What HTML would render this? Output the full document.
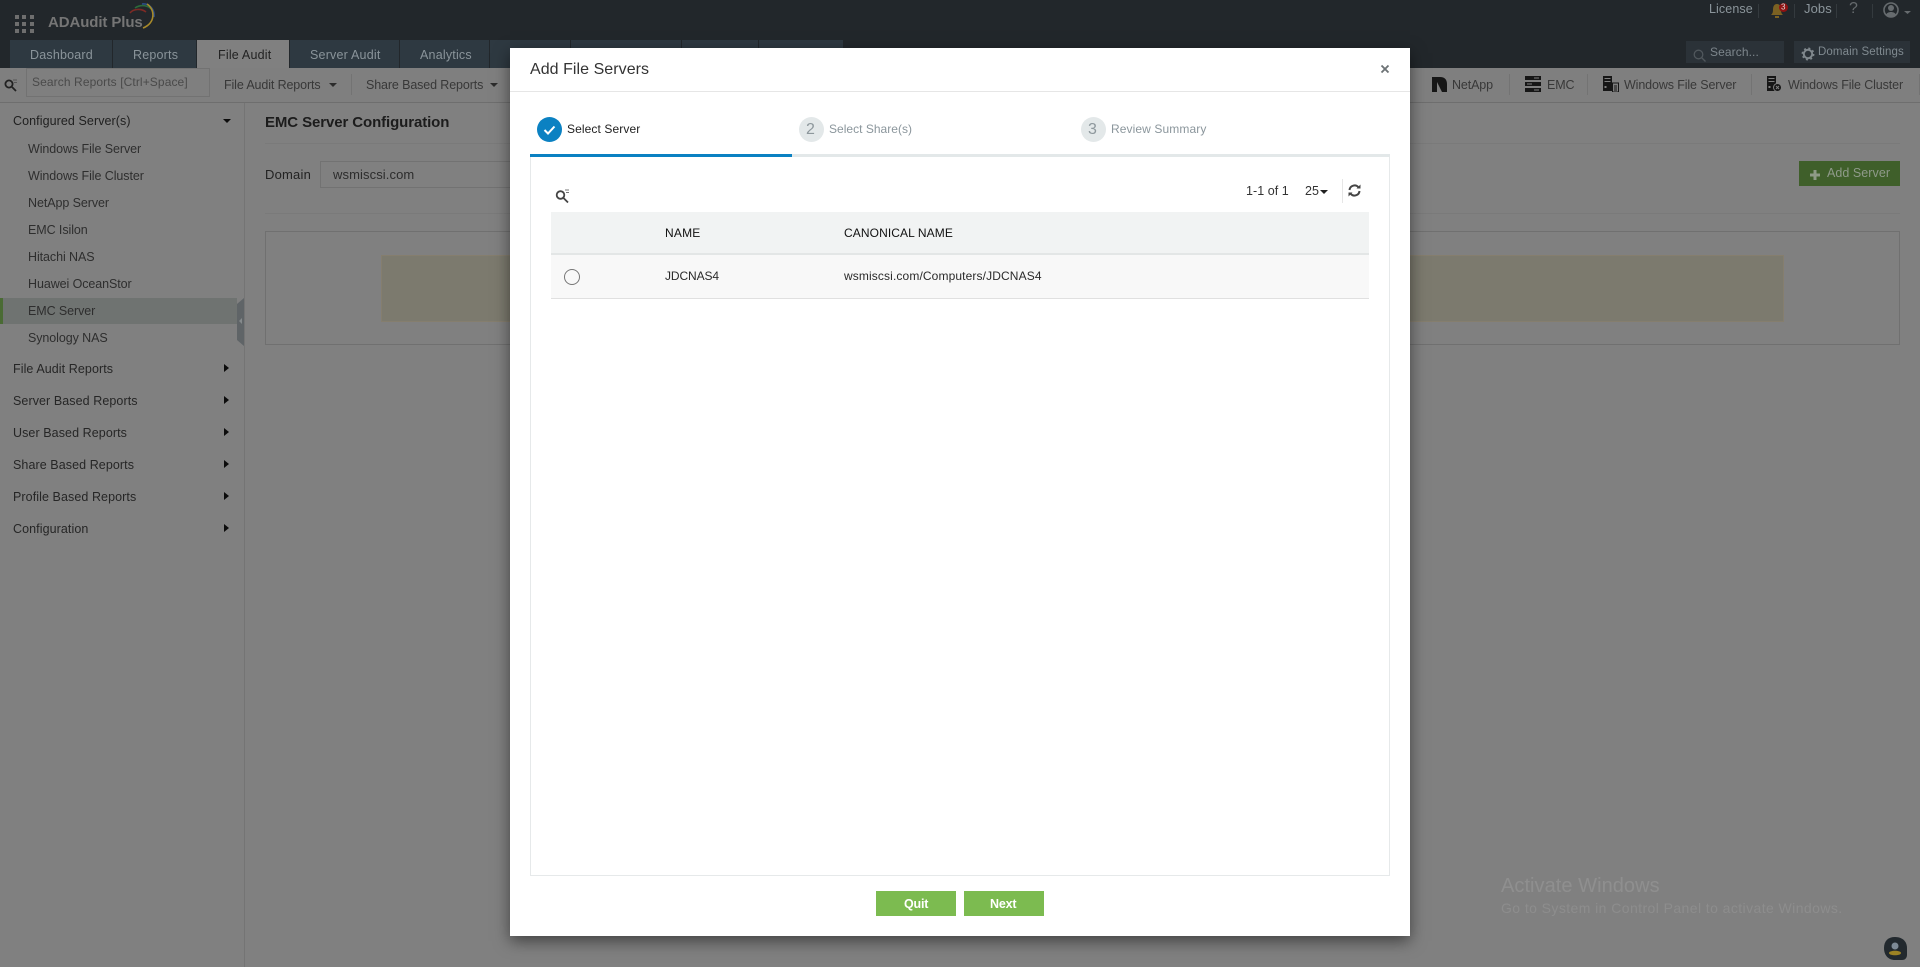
<!DOCTYPE html>
<html><head><meta charset="utf-8"><title>ADAudit Plus</title>
<style>
html,body{margin:0;padding:0;width:1920px;height:967px;overflow:hidden;background:#808080;font-family:"Liberation Sans",sans-serif}
div,span.t,svg{position:absolute}
.t{white-space:nowrap;transform:translateY(calc(-50% + 1px));font-size:13px;line-height:16px;color:#2d2d2d;letter-spacing:.1px}
.tab{color:#8a949a;font-size:12.500px;letter-spacing:.2px}
.b{top:40px;height:28px;background:#2e3941}
.s{left:28px;color:#2e2e2e;font-size:12.500px;letter-spacing:-.08px}
.m{left:13px;color:#262626;font-size:12.500px;letter-spacing:.08px}
.arr{left:224px;width:0;height:0;border-left:5px solid #0c0c0c;border-top:4.500px solid transparent;border-bottom:4.500px solid transparent}
.sep{width:1px;background:#737373;top:74px;height:21px}
.tb{color:#383838;font-size:12.500px;letter-spacing:-.12px;top:84px}
.g{color:#8b969c;font-size:12px}
</style></head><body>

<!-- header -->
<div style="left:0;top:0;width:1920px;height:68px;background:#22272b"></div>
<svg style="left:15px;top:15px" width="19" height="18"><g fill="#6e6e6e"><rect width="4" height="4"/><rect x="7" width="4" height="4"/><rect x="15" width="4" height="4"/><rect y="7" width="4" height="4"/><rect x="7" y="7" width="4" height="4"/><rect x="15" y="7" width="4" height="4"/><rect y="14" width="4" height="4"/><rect x="7" y="14" width="4" height="4"/><rect x="15" y="14" width="4" height="4"/></g></svg>
<span class="t" style="left:48px;top:22px;font-size:15px;font-weight:bold;color:#757575;letter-spacing:-.1px">ADAudit Plus</span>
<svg style="left:128px;top:3px" width="32" height="27" fill="none" stroke-width="1.600"><path d="M2 10C5 6 13 5 18 9" stroke="#7d2a25"/><path d="M7 5C13 1 21 2 25 8" stroke="#2c6b3a"/><path d="M14 1C21 0 27 6 26 14" stroke="#2b4f8e"/><path d="M19 1C27 6 28 20 15 25" stroke="#a88a2a"/></svg>

<div class="b" style="left:10px;width:102px"></div>
<div class="b" style="left:113px;width:83px"></div>
<div style="left:197px;top:40px;width:92px;height:28px;background:#808080"></div>
<div class="b" style="left:290px;width:109px"></div>
<div class="b" style="left:400px;width:89px"></div>
<div class="b" style="left:490px;width:80px"></div>
<div class="b" style="left:571px;width:110px"></div>
<div class="b" style="left:682px;width:76px"></div>
<div class="b" style="left:759px;width:84px"></div>
<span class="t tab" style="left:30px;top:54px">Dashboard</span>
<span class="t tab" style="left:133px;top:54px">Reports</span>
<span class="t tab" style="left:218px;top:54px;color:#222">File Audit</span>
<span class="t tab" style="left:310px;top:54px">Server Audit</span>
<span class="t tab" style="left:420px;top:54px">Analytics</span>

<span class="t" style="left:1709px;top:8px;color:#8b959b;font-size:12.500px;letter-spacing:.1px">License</span>
<div style="left:1758px;top:4px;width:1px;height:14px;background:#343a3e"></div>
<svg style="left:1770px;top:3px" width="15" height="15"><path d="M7 1C3.800 1 3 4 3 7C3 10 2 11 1 12H13C12 11 11 10 11 7C11 4 10 1 7 1Z" fill="#7b6122"/><rect x="5" y="13" width="4" height="2" fill="#7b6122"/></svg>
<div style="left:1779px;top:3px;width:9px;height:9px;border-radius:5px;background:#8f1212"></div>
<span class="t" style="left:1781px;top:6px;font-size:8px;line-height:9px;color:#ddd;letter-spacing:0">3</span>
<div style="left:1794px;top:4px;width:1px;height:14px;background:#343a3e"></div>
<span class="t" style="left:1804px;top:8px;color:#8b959b;font-size:13px">Jobs</span>
<div style="left:1836px;top:4px;width:1px;height:14px;background:#343a3e"></div>
<span class="t" style="left:1849px;top:8px;color:#666b6e;font-size:16px">?</span>
<div style="left:1872px;top:4px;width:1px;height:14px;background:#343a3e"></div>
<svg style="left:1883px;top:2px" width="34" height="17"><circle cx="8" cy="8" r="7" fill="none" stroke="#666b6e" stroke-width="1.600"/><circle cx="8" cy="6" r="3" fill="#666b6e"/><path d="M3 13C4 9 12 9 13 13L8 15Z" fill="#666b6e"/><path d="M21 9H28L24.500 12Z" fill="#666b6e"/></svg>

<div style="left:1686px;top:41px;width:98px;height:22px;background:#2b3238"></div>
<svg style="left:1693px;top:49px" width="14" height="14" fill="none" stroke="#50575c" stroke-width="1.300"><circle cx="5.500" cy="5.500" r="4.300"/><path d="M8.500 8.500L12.500 12.500"/></svg>
<span class="t" style="left:1710px;top:51px;color:#7d868c;font-size:12px;letter-spacing:.1px">Search...</span>
<div style="left:1794px;top:41px;width:116px;height:22px;background:#2b3238"></div>
<svg style="left:1801px;top:47px" width="14" height="14" fill="none" stroke="#80888d" stroke-width="2"><circle cx="7" cy="7" r="4.200"/><circle cx="7" cy="7" r="5.700" stroke-width="1.500" stroke-dasharray="2 2.500"/></svg>
<span class="t" style="left:1818px;top:51px;color:#808a90;font-size:11.500px;letter-spacing:.1px">Domain Settings</span>

<!-- toolbar -->
<div style="left:0;top:68px;width:1920px;height:34px;background:#7f7f7f"></div>
<div style="left:0;top:102px;width:1920px;height:1px;background:#6e6e6e"></div>
<svg style="left:4px;top:78px" width="14" height="14" fill="none" stroke="#222" stroke-width="1.800"><circle cx="5" cy="6" r="3.600"/><path d="M8 9L12 13"/><path d="M9 2H13M10 4.500H13" stroke-width="1" stroke="#555"/></svg>
<div style="left:26px;top:68px;width:184px;height:29px;border:1px solid #727272;box-sizing:border-box"></div>
<span class="t" style="left:32px;top:81px;color:#4a4a4a;font-size:12px;letter-spacing:.1px">Search Reports [Ctrl+Space]</span>
<span class="t tb" style="left:224px">File Audit Reports</span>
<svg style="left:328px;top:82px" width="10" height="6"><path d="M1 1H9L5 5Z" fill="#2c2c2c"/></svg>
<div class="sep" style="left:351px"></div>
<span class="t tb" style="left:366px">Share Based Reports</span>
<svg style="left:489px;top:82px" width="10" height="6"><path d="M1 1H9L5 5Z" fill="#2c2c2c"/></svg>

<svg style="left:1432px;top:77px" width="16" height="15"><path d="M0 0H8C13 0 15 3 15 7V15H10V7C10 5 9 5 8 5H5V15H0Z" fill="#161616"/><path d="M10 15L5 5H10Z" fill="#161616"/></svg>
<span class="t tb" style="left:1452px">NetApp</span>
<div class="sep" style="left:1509px"></div>
<svg style="left:1525px;top:76px" width="16" height="16" fill="#161616"><rect width="16" height="4"/><rect y="6" width="16" height="4"/><rect y="12" width="16" height="4"/><g fill="#7f7f7f"><rect x="9" y="1.500" width="5" height="1"/><rect x="2" y="7.500" width="5" height="1"/><rect x="9" y="13.500" width="5" height="1"/></g></svg>
<span class="t tb" style="left:1547px">EMC</span>
<div class="sep" style="left:1587px"></div>
<svg style="left:1603px;top:76px" width="16" height="16"><rect width="9" height="15" fill="#161616"/><g fill="#7f7f7f"><rect x="1.500" y="2" width="6" height="1"/><rect x="1.500" y="5" width="6" height="1"/><rect x="1.500" y="10" width="2" height="2"/></g><rect x="9.500" y="7" width="6" height="9" fill="#7f7f7f" stroke="#161616"/><path d="M11 10H14M11 12H14M11 14H14" stroke="#161616"/></svg>
<span class="t tb" style="left:1624px">Windows File Server</span>
<div class="sep" style="left:1751px"></div>
<svg style="left:1767px;top:76px" width="15" height="16"><rect width="9" height="15" fill="#161616"/><g fill="#7f7f7f"><rect x="1.500" y="2" width="6" height="1"/><rect x="1.500" y="5" width="6" height="1"/><rect x="1.500" y="10" width="2" height="2"/></g><circle cx="10.500" cy="11.500" r="4" fill="#161616" stroke="#7f7f7f"/><path d="M9 10L12 13M12 10L9 13" stroke="#7f7f7f"/></svg>
<span class="t tb" style="left:1788px">Windows File Cluster</span>
<div class="sep" style="left:1919px"></div>

<!-- sidebar -->
<div style="left:244px;top:103px;width:1px;height:864px;background:#747474"></div>
<span class="t m" style="top:120px;color:#202020">Configured Server(s)</span>
<svg style="left:222px;top:118px" width="10" height="6"><path d="M1 1H9L5 5Z" fill="#0c0c0c"/></svg>
<span class="t s" style="top:148px">Windows File Server</span>
<span class="t s" style="top:175px">Windows File Cluster</span>
<span class="t s" style="top:202px">NetApp Server</span>
<span class="t s" style="top:229px">EMC Isilon</span>
<span class="t s" style="top:256px">Hitachi NAS</span>
<span class="t s" style="top:283px">Huawei OceanStor</span>
<div style="left:0;top:298px;width:237px;height:26px;background:#6f7371"></div>
<div style="left:0;top:298px;width:3px;height:26px;background:#4a6b34"></div>
<span class="t s" style="top:310px">EMC Server</span>
<svg style="left:237px;top:298px" width="7" height="48"><path d="M7 0V48L0 42V6Z" fill="#5f6467"/><path d="M5 20V26L2 23Z" fill="#858a8c"/></svg>
<span class="t s" style="top:337px">Synology NAS</span>
<span class="t m" style="top:368px">File Audit Reports</span><div class="arr" style="top:364px"></div>
<span class="t m" style="top:400px">Server Based Reports</span><div class="arr" style="top:396px"></div>
<span class="t m" style="top:432px">User Based Reports</span><div class="arr" style="top:428px"></div>
<span class="t m" style="top:464px">Share Based Reports</span><div class="arr" style="top:460px"></div>
<span class="t m" style="top:496px">Profile Based Reports</span><div class="arr" style="top:492px"></div>
<span class="t m" style="top:528px">Configuration</span><div class="arr" style="top:524px"></div>

<!-- main -->
<span class="t" style="left:265px;top:122px;font-size:15px;color:#1c1c1c;font-weight:bold;letter-spacing:-.1px">EMC Server Configuration</span>
<div style="left:265px;top:143px;width:1635px;height:1px;background:#7a7a7a"></div>
<span class="t" style="left:265px;top:174px;color:#222;font-size:13px;letter-spacing:.2px">Domain</span>
<div style="left:320px;top:161px;width:200px;height:27px;border:1px solid #727272;box-sizing:border-box"></div>
<span class="t" style="left:333px;top:174px;color:#2c2c2c;font-size:13px;letter-spacing:.1px">wsmiscsi.com</span>
<div style="left:1799px;top:161px;width:101px;height:25px;background:#3f5f2a"></div>
<svg style="left:1810px;top:170px" width="10" height="10"><path d="M3.500 0H6.500V3.500H10V6.500H6.500V10H3.500V6.500H0V3.500H3.500Z" fill="#8e9a86"/></svg>
<span class="t" style="left:1827px;top:172px;color:#8f9a8a;font-size:12.500px;letter-spacing:.05px">Add Server</span>
<div style="left:265px;top:213px;width:1635px;height:1px;background:#7a7a7a"></div>
<div style="left:265px;top:231px;width:1635px;height:114px;border:1px solid #707070;box-sizing:border-box"></div>
<div style="left:381px;top:255px;width:1403px;height:67px;background:#7c7a6e;border:1px solid #857e6e;box-sizing:border-box"></div>

<span class="t" style="left:1501px;top:885px;font-size:20px;color:#8f8f8f;letter-spacing:.05px">Activate Windows</span>
<span class="t" style="left:1501px;top:907px;font-size:14px;color:#8d8d8d;letter-spacing:.42px">Go to System in Control Panel to activate Windows.</span>
<svg style="left:1883px;top:936px" width="25" height="25"><path d="M12 1C19 1 24 5 24 12V19C24 22 22 24 19 24H12C5 24 1 19 1 12C1 5 5 1 12 1Z" fill="#22292e"/><circle cx="12" cy="10" r="3.500" fill="#7d8a96"/><path d="M6 17C6 14 18 14 18 17C18 20 6 20 6 17Z" fill="#9c8324"/></svg>

<!-- modal -->
<div style="left:510px;top:48px;width:900px;height:888px;background:#fff;box-shadow:0 5px 15px rgba(0,0,0,.5)"></div>
<span class="t" style="left:530px;top:69px;font-size:16px;color:#333;letter-spacing:.05px">Add File Servers</span>
<svg style="left:1380px;top:64px" width="10" height="10"><path d="M1.500 1.500L8.500 8.500M8.500 1.500L1.500 8.500" stroke="#6d7376" stroke-width="1.900"/></svg>
<div style="left:510px;top:91px;width:900px;height:1px;background:#e6e6e6"></div>

<svg style="left:537px;top:117px" width="25" height="25"><circle cx="12.500" cy="12.500" r="12.500" fill="#0b81c2"/><path d="M7.500 13L11 16.500L17.500 9.500" fill="none" stroke="#fff" stroke-width="2"/></svg>
<span class="t" style="left:567px;top:128px;color:#222;font-size:12px;letter-spacing:.1px">Select Server</span>
<div style="left:799px;top:117px;width:25px;height:25px;border-radius:50%;background:#e3e8e9"></div>
<span class="t" style="left:806px;top:129px;color:#8d979c;font-size:16px;letter-spacing:0">2</span>
<span class="t g" style="left:829px;top:128px;letter-spacing:.02px">Select Share(s)</span>
<div style="left:1081px;top:117px;width:25px;height:25px;border-radius:50%;background:#e3e8e9"></div>
<span class="t" style="left:1088px;top:129px;color:#8d979c;font-size:16px;letter-spacing:0">3</span>
<span class="t g" style="left:1111px;top:128px;letter-spacing:.1px">Review Summary</span>

<div style="left:530px;top:157px;width:860px;height:719px;border:1px solid #e6e9ea;border-top:0;box-sizing:border-box"></div>
<div style="left:530px;top:154px;width:860px;height:3px;background:#e3e8e9"></div>
<div style="left:530px;top:154px;width:262px;height:3px;background:#0b81c2"></div>

<svg style="left:555px;top:189px" width="15" height="15" fill="none" stroke="#444" stroke-width="1.800"><circle cx="5.500" cy="6" r="3.800"/><path d="M8.500 9L13 13.500"/><path d="M10 1H14M11 3.500H14" stroke-width="1" stroke="#777"/></svg>

<span class="t" style="left:1246px;top:190px;color:#333;font-size:12.500px;letter-spacing:.05px">1-1 of 1</span>
<span class="t" style="left:1305px;top:190px;color:#333;font-size:12.500px;letter-spacing:.05px">25</span>
<svg style="left:1320px;top:190px" width="9" height="5"><path d="M0 0H8L4 4Z" fill="#222"/></svg>
<div style="left:1342px;top:179px;width:1px;height:24px;background:#e6e6e6"></div>
<svg style="left:1348px;top:184px" width="13" height="13" fill="none" stroke="#444" stroke-width="2"><path d="M1.500 6A5 5 0 0 1 10.500 3.500"/><path d="M11.500 7A5 5 0 0 1 2.500 9.500"/><path d="M8.500 4.500H12.500V0.500Z" fill="#444" stroke="none"/><path d="M4.500 8.500H.5V12.500Z" fill="#444" stroke="none"/></svg>

<div style="left:551px;top:212px;width:818px;height:41px;background:#f1f3f3"></div>
<div style="left:551px;top:253px;width:818px;height:2px;background:#e3e6e6"></div>
<div style="left:551px;top:255px;width:818px;height:43px;background:#f8f8f8"></div>
<div style="left:551px;top:298px;width:818px;height:1px;background:#e0e0e0"></div>
<span class="t" style="left:665px;top:232px;color:#111;font-size:12px;letter-spacing:.2px">NAME</span>
<span class="t" style="left:844px;top:232px;color:#111;font-size:12px;letter-spacing:.1px">CANONICAL NAME</span>
<div style="left:564px;top:269px;width:16px;height:16px;border:1.500px solid #777;border-radius:50%;box-sizing:border-box"></div>
<span class="t" style="left:665px;top:275px;color:#2a2a2a;font-size:12px;letter-spacing:-.1px">JDCNAS4</span>
<span class="t" style="left:844px;top:275px;color:#2a2a2a;font-size:12px;letter-spacing:.12px">wsmiscsi.com/Computers/JDCNAS4</span>

<div style="left:876px;top:891px;width:80px;height:25px;background:#7cbb50"></div>
<div style="left:964px;top:891px;width:80px;height:25px;background:#7cbb50"></div>
<span class="t" style="left:904px;top:903px;color:#fff;font-size:12.500px;font-weight:bold;letter-spacing:-.2px">Quit</span>
<span class="t" style="left:990px;top:903px;color:#fff;font-size:12.500px;font-weight:bold;letter-spacing:-.2px">Next</span>
</body></html>
